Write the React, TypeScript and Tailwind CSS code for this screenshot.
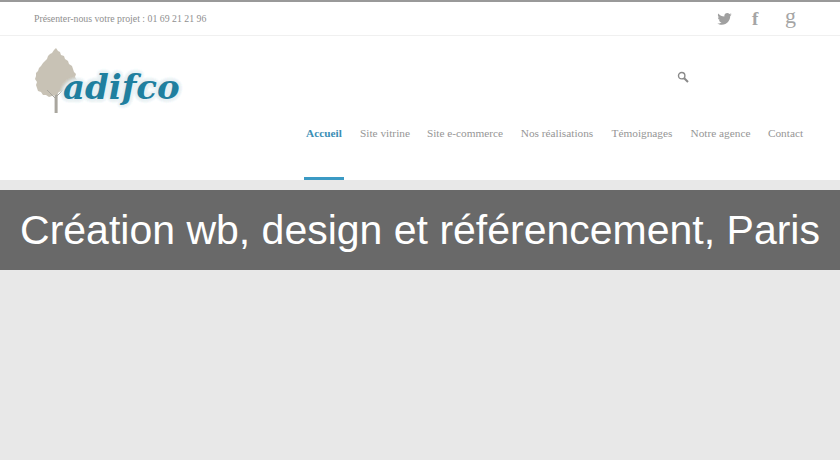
const navItems = [
  { label: "Accueil", width: "w-[40px] -mr-px", active: true },
  { label: "Site vitrine", width: "w-[50px]", active: false },
  { label: "Site e-commerce", width: "w-[76px]", active: false },
  { label: "Nos réalisations", width: "w-[74px]", active: false },
  { label: "Témoignages", width: "w-[62px]", active: false },
  { label: "Notre agence", width: "w-[61px]", active: false },
  { label: "Contact", width: "w-[35px]", active: false },
];

function Tree() {
  return (
    <svg width="43" height="67" viewBox="0 0 43 67" className="shrink-0">
      <rect x="19.6" y="42" width="3" height="24" fill="#a9a69e" />
      <polygon
        points="21,1 23,4 25,5 26,8 29,9 30,12 33,14 34,17 37,19 38,22 39,25 41,27 40,30 42,33 39,36 36,37 34,40 31,42 27,44 24,45 21,48 17,49 14,50 11,48 8,48 6,45 3,44 2,41 1,38 2,35 0,32 1,29 1,26 3,24 4,21 6,19 8,16 10,14 12,12 13,9 15,7 17,6 19,3"
        fill="#c8c2b5"
      />
      <path d="M21 52l-9-9M21 50l8-8" stroke="#a9a69e" strokeWidth="1" />
    </svg>
  );
}

function Logo() {
  return (
    <div className="flex items-start">
      <Tree />
      <div className="relative -ml-[15px] mt-[18px] flex h-[44px] items-center">
        <span className="font-['DejaVu_Serif',serif] text-[34px] leading-none font-bold italic text-[#1f7f9f] [text-shadow:0_0_4px_#eaf2f5,0_0_4px_#eaf2f5,0_0_5px_#dfeaee,0_0_5px_#dfeaee,0_0_5px_#dfeaee,0_0_5px_#dfeaee]">
          adifco
        </span>
      </div>
    </div>
  );
}

function SearchIcon() {
  return (
    <svg width="12" height="12" viewBox="0 0 12 12" fill="none" stroke="#8a8a8a">
      <circle cx="4.7" cy="4.7" r="3.2" strokeWidth="1.4" />
      <path d="M7.2 7.2l3.8 3.8" strokeWidth="2" />
    </svg>
  );
}

function SocialIcons() {
  return (
    <div className="flex items-center text-[#a5a5a5]">
      <svg width="15" height="12" viewBox="0 0 24 20" fill="#a0a0a0">
        <path d="M24 2.400c-.9.400-1.800.700-2.800.800 1-.600 1.800-1.600 2.200-2.700-1 .600-2 1-3.100 1.200C19.300.700 18 0 16.600 0c-2.700 0-4.900 2.200-4.900 4.900 0 .400 0 .800.100 1.100C7.700 5.800 4.100 3.900 1.700.900c-.400.700-.700 1.600-.700 2.500 0 1.700.900 3.200 2.200 4.100-.800 0-1.600-.200-2.200-.600v.100c0 2.400 1.700 4.400 3.900 4.800-.400.100-.800.200-1.300.200-.300 0-.600 0-.900-.100.600 2 2.400 3.400 4.600 3.400-1.700 1.300-3.800 2.100-6.100 2.100-.400 0-.800 0-1.200-.100C2.200 18.600 4.800 19.500 7.500 19.500c9.100 0 14-7.500 14-14v-.600c1-.700 1.800-1.600 2.500-2.500z" />
      </svg>
      <span className="ml-[20px] w-[8px] font-['Liberation_Serif',serif] text-[19px] leading-none font-bold">f</span>
      <span className="-mt-[6px] ml-[25px] w-[10px] font-['Liberation_Serif',serif] text-[22px] leading-none">g</span>
    </div>
  );
}

export default function App() {
  return (
    <div className="flex h-[460px] w-[840px] flex-col overflow-hidden bg-[#e8e8e8]">
      <div className="h-[2px] bg-[#999999]" />
      <div className="flex h-[34px] items-center justify-between border-b border-[#f0f0f0] bg-white pr-[45px] pl-[34px]">
        <span className="pt-[1px] font-['Liberation_Serif',serif] text-[9.8px] text-[#8f8f8f]">
          Présenter-nous votre projet : 01 69 21 21 96
        </span>
        <SocialIcons />
      </div>
      <div className="flex h-[144px] bg-white">
        <div className="w-[304px] shrink-0 pt-[11px] pl-[35px]">
          <Logo />
        </div>
        <div className="flex flex-1 flex-col">
          <div className="h-[36px] pt-[35px] pl-[373px]">
            <SearchIcon />
          </div>
          <nav className="mt-auto flex gap-[17px]">
            {navItems.map((item) => (
              <div
                key={item.label}
                className={`flex h-[67px] justify-center pt-[15px] ${item.width} ${
                  item.active ? "border-b-[3px] border-[#3b9ac4]" : ""
                }`}
              >
                <span
                  className={`font-['Liberation_Serif',serif] text-[11.3px] leading-none whitespace-nowrap ${
                    item.active ? "font-bold text-[#3b8fb5]" : "text-[#969696]"
                  }`}
                >
                  {item.label}
                </span>
              </div>
            ))}
          </nav>
        </div>
      </div>
      <div className="mt-[10px] flex h-[80px] items-center justify-center bg-[#696969]">
        <h1 className="font-['Liberation_Sans',sans-serif] text-[41px] leading-none whitespace-nowrap text-white">
          Création wb, design et référencement, Paris
        </h1>
      </div>
    </div>
  );
}
